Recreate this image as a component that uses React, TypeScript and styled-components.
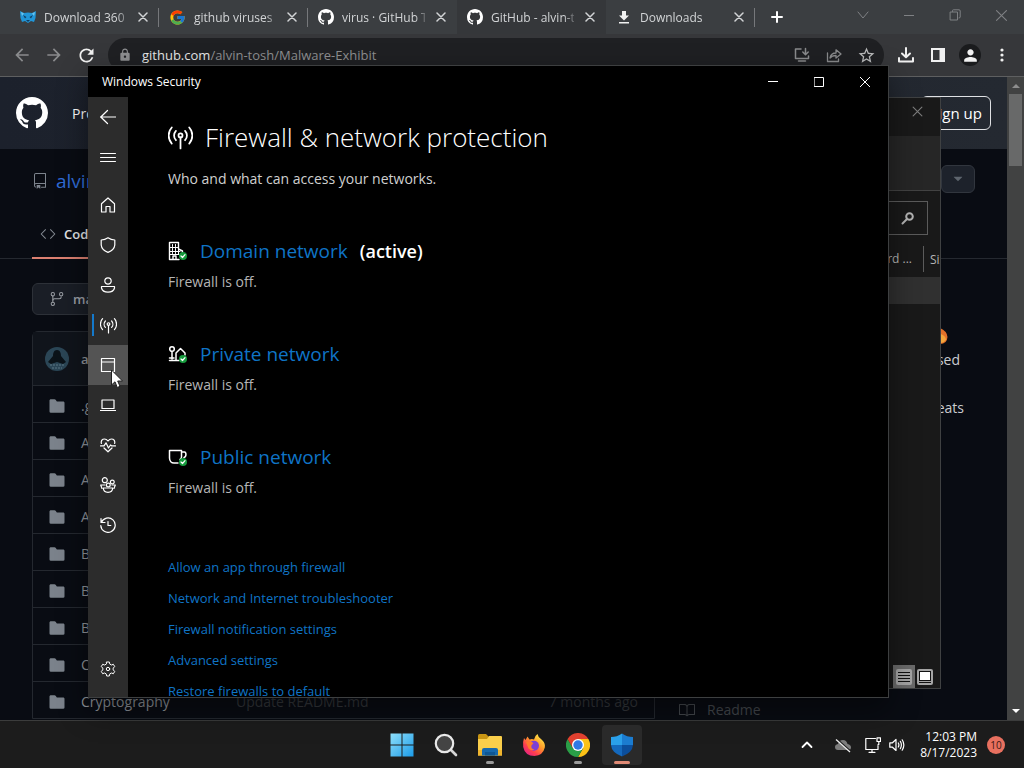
import React from "react";
import styled, { createGlobalStyle, css } from "styled-components";
import {
  GoRepo,
  GoCode,
  GoGitBranch,
  GoFileDirectoryFill,
  GoBook,
  GoTriangleDown,
} from "react-icons/go";
import { FcGoogle } from "react-icons/fc";
import { MdLock, MdStarOutline, MdRefresh, MdPerson, MdArrowBack, MdArrowForward } from "react-icons/md";

const GlobalStyle = createGlobalStyle`
  * { box-sizing: border-box; }
  body {
    margin: 0;
    background: #0a0d14;
    font-family: "Open Sans", "Noto Sans", sans-serif;
    font-size: 13px;
    color: #fff;
  }
  button {
    font: inherit;
    color: inherit;
    background: none;
    border: 0;
    padding: 0;
    display: flex;
    align-items: center;
    justify-content: center;
  }
  a { color: inherit; text-decoration: none; }
  svg { display: block; flex: none; }
  h1, h2, p, ul { margin: 0; padding: 0; font-weight: 400; }
  ul { list-style: none; }
`;

const Desktop = styled.div`
  position: relative;
  display: flex;
  flex-direction: column;
  height: 100vh;
  overflow: hidden;
`;

/* ---------- Browser ---------- */

const Browser = styled.div`
  flex: 1;
  min-height: 0;
  display: flex;
  flex-direction: column;
`;

const TabStrip = styled.div`
  display: flex;
  height: 34px;
  padding-left: 10px;
  background: #3b3e41;
`;

const Tab = styled.div<{ $active?: boolean; $divider?: boolean }>`
  flex: 0 1 149px;
  min-width: 0;
  display: flex;
  align-items: center;
  gap: 8px;
  padding: 0 8px 0 10px;
  position: relative;
  color: #d2d4d6;
  font-size: 12px;
  background: ${(p) => (p.$active ? "#35373a" : "transparent")};
  ${(p) =>
    p.$divider &&
    css`
      &::after {
        content: "";
        position: absolute;
        right: 0;
        top: 8px;
        width: 1px;
        height: 19px;
        background: #76787b;
      }
    `}
`;

const TabTitle = styled.span`
  flex: 1;
  min-width: 0;
  overflow: hidden;
  white-space: nowrap;
  mask-image: linear-gradient(to right, #000 88%, transparent 105%);
`;

const TabClose = styled.button`
  width: 16px;
  height: 16px;
`;

const NewTab = styled.button`
  width: 44px;
  height: 34px;
`;

const BrowserControls = styled.div`
  display: flex;
  height: 30px;
  margin-left: auto;
  color: #7f8184;
  button { width: 46px; }
`;

const Toolbar = styled.div`
  display: flex;
  align-items: center;
  height: 43px;
  padding: 0 6px;
  background: #36373a;
  border-bottom: 1px solid #5e5f60;
`;

const ToolButton = styled.button<{ $dim?: boolean }>`
  width: 32px;
  height: 32px;
  color: ${(p) => (p.$dim ? "#8a8b8d" : "#f1f1f1")};
`;

const AddressBar = styled.div`
  flex: 1;
  display: flex;
  align-items: center;
  height: 34px;
  margin: 0 6px;
  padding: 0 2px 0 10px;
  border-radius: 17px;
  background: #1f2023;
  color: #8e8f91;
`;

const Url = styled.span`
  flex: 1;
  margin-left: 10px;
  font-size: 13px;
  b { font-weight: 400; color: #e6e7e8; }
`;

const Avatar = styled.span`
  display: flex;
  align-items: center;
  justify-content: center;
  width: 22px;
  height: 22px;
  border-radius: 50%;
  background: #1a1b1d;
`;

const Viewport = styled.div`
  flex: 1;
  min-height: 0;
  display: flex;
`;

const ScrollBar = styled.div`
  flex: none;
  width: 17px;
  display: flex;
  flex-direction: column;
  align-items: center;
  justify-content: space-between;
  padding: 7px 0;
  background: #414242;
`;

const ScrollTop = styled.div`
  display: flex;
  flex-direction: column;
  align-items: center;
  gap: 6px;
`;

const Thumb = styled.div`
  width: 13px;
  height: 72px;
  background: #686969;
`;

/* ---------- Repository page ---------- */

const Page = styled.div`
  flex: 1;
  min-width: 0;
  overflow: hidden;
  background: #090c13;
`;

const SiteHeader = styled.header`
  display: flex;
  align-items: center;
  gap: 24px;
  height: 72px;
  padding: 0 16px;
  background: linear-gradient(to right, #1c212c, #242931);
  font-size: 14px;
`;

const SignUp = styled.button`
  height: 34px;
  margin-left: auto;
  padding: 0 8px;
  border: 1px solid #dfe1e4;
  border-radius: 6px;
  font-size: 15px;
`;

const RepoHead = styled.div`
  display: flex;
  align-items: flex-start;
  justify-content: space-between;
  padding: 16px 32px 0;
`;

const RepoName = styled.div`
  display: flex;
  align-items: center;
  gap: 8px;
  height: 32px;
  color: #7d848d;
  font-size: 19px;
  a { color: #2f6bd6; }
`;

const MoreButton = styled.button`
  height: 28px;
  padding: 0 8px;
  border: 1px solid #31363e;
  border-radius: 6px;
  background: #1d222b;
  color: #5d646d;
`;

const RepoTabs = styled.nav`
  display: flex;
  height: 48px;
  margin-top: 14px;
  padding: 0 32px;
  border-bottom: 1px solid #252930;
`;

const RepoTab = styled.a`
  display: flex;
  align-items: center;
  gap: 8px;
  height: 48px;
  padding: 0 8px;
  border-bottom: 2px solid #dc8071;
  font-weight: 600;
  color: #e4e6e8;
  svg { color: #858b93; }
`;

const Columns = styled.div`
  display: flex;
  gap: 24px;
  padding: 24px 32px 0;
`;

const FilesColumn = styled.div`
  flex: 1;
  min-width: 0;
`;

const BranchButton = styled.button`
  height: 32px;
  gap: 8px;
  padding: 0 16px;
  border: 1px solid #2d3138;
  border-radius: 6px;
  background: #1a1e26;
  color: #9b9fa5;
  font-weight: 600;
`;

const FileBox = styled.div`
  margin-top: 16px;
  border: 1px solid #24282f;
  border-radius: 6px 6px 0 0;
  color: #90949a;
`;

const CommitBar = styled.div`
  display: flex;
  align-items: center;
  gap: 12px;
  height: 53px;
  padding: 0 12px;
  background: #10141b;
  font-weight: 600;
`;

const FileRow = styled.li`
  display: flex;
  align-items: center;
  height: 37px;
  padding: 3px 16px 0 15px;
  border-top: 1px solid #24282f;
  font-size: 14px;
  svg { color: #7b828b; }
`;

const FileName = styled.a`
  width: 155px;
  margin-left: 15px;
`;

const FileNote = styled.span`
  flex: 1;
  color: #34373b;
`;

const FileAge = styled.time`
  color: #34373b;
`;

const AboutColumn = styled.aside`
  flex: 0 0 296px;
  display: flex;
  flex-direction: column;
  font-size: 14px;
  line-height: 24px;
`;

const AboutText = styled.p`
  display: flex;
  flex-direction: column;
  align-items: flex-end;
  height: 375px;
  padding: 41px 11px 0 0;
  color: #c9ccd0;
`;

const AboutLine = styled.span<{ $inset?: number }>`
  display: flex;
  align-items: center;
  height: 24px;
  padding-right: ${(p) => p.$inset ?? 0}px;
`;

const ReadmeLink = styled.a`
  display: flex;
  align-items: center;
  gap: 12px;
  margin-top: 40px;
  color: #44484d;
`;

/* ---------- Background explorer window ---------- */

const ExplorerWindow = styled.section`
  position: absolute;
  left: 280px;
  right: 83px;
  top: 97px;
  bottom: 79px;
  display: flex;
  flex-direction: column;
  border: 1px solid #3f4142;
  background: #191919;
  color: #b4b4b4;
`;

const ExplorerTitle = styled.div`
  display: flex;
  justify-content: flex-end;
  height: 38px;
  button {
    width: 46px;
    height: 26px;
    color: #7c7c7c;
  }
`;

const ExplorerRibbon = styled.div`
  height: 55px;
  background: #262626;
  border-bottom: 1px solid #424242;
`;

const ExplorerSearch = styled.label`
  display: flex;
  align-items: center;
  align-self: flex-end;
  width: 200px;
  height: 34px;
  margin: 10px 12px 0 0;
  border: 1px solid #5b5b5b;
  padding-right: 12px;
  input {
    flex: 1;
    min-width: 0;
    border: 0;
    background: none;
  }
`;

const ExplorerHead = styled.div`
  display: flex;
  justify-content: flex-end;
  align-items: center;
  height: 42px;
  padding-top: 6px;
  font-size: 12px;
  overflow: hidden;
  span:first-child {
    padding-right: 11px;
    line-height: 26px;
    border-right: 1px solid #5b5b5b;
  }
  span:last-child {
    width: 16px;
    padding-left: 6px;
    white-space: nowrap;
    overflow: hidden;
  }
`;

const ExplorerSelected = styled.div`
  height: 27px;
  background: #303030;
`;

const ExplorerFooter = styled.div`
  display: flex;
  justify-content: flex-end;
  margin-top: auto;
  padding-right: 5px;
  button {
    width: 20px;
    height: 23px;
  }
  button:first-child {
    width: 22px;
    background: #6b6b6b;
  }
`;

/* ---------- Windows Security ---------- */

const SecurityWindow = styled.section`
  position: absolute;
  left: 88px;
  right: 135px;
  top: 65px;
  bottom: 70px;
  display: flex;
  flex-direction: column;
  border: 1px solid #3d3f40;
  border-left: 0;
  background: #000;
  box-shadow: 0 12px 28px rgba(0, 0, 0, 0.45);
  overflow: hidden;
`;

const TitleBar = styled.div`
  display: flex;
  justify-content: space-between;
  align-items: center;
  height: 31px;
  padding-left: 14px;
  font-size: 12px;
`;

const TitleControls = styled.div`
  display: flex;
  button {
    width: 46px;
    height: 31px;
  }
`;

const WindowBody = styled.div`
  flex: 1;
  min-height: 0;
  display: flex;
`;

const Rail = styled.nav`
  flex: none;
  width: 40px;
  display: flex;
  flex-direction: column;
  padding-bottom: 8px;
  background: #2c2c2c;
`;

const RailButton = styled.button<{ $hover?: boolean; $current?: boolean; $place?: "gap" | "end" }>`
  position: relative;
  width: 40px;
  height: 40px;
  margin-top: ${(p) => (p.$place === "end" ? "auto" : p.$place === "gap" ? "8px" : "0")};
  background: ${(p) => (p.$hover ? "#545454" : "transparent")};
  ${(p) =>
    p.$current &&
    css`
      &::before {
        content: "";
        position: absolute;
        left: 4px;
        top: 9px;
        width: 2px;
        height: 22px;
        background: #1479cb;
      }
    `}
`;

const Content = styled.main`
  flex: 1;
  min-width: 0;
  padding: 22px 40px 0;
  overflow: hidden;
`;

const Heading = styled.h1`
  display: flex;
  align-items: center;
  gap: 12px;
  height: 36px;
  font-size: 26px;
  font-weight: 300;
  white-space: nowrap;
`;

const Lead = styled.p`
  margin-top: 14px;
  font-size: 14px;
  line-height: 20px;
  color: #d0d0d0;
`;

const Networks = styled.div`
  display: flex;
  flex-direction: column;
  gap: 48px;
  margin-top: 48px;
`;

const NetworkTitle = styled.h2`
  display: flex;
  align-items: center;
  gap: 12px;
  height: 28px;
  font-size: 19px;
  a { color: #0f74c6; }
  strong { font-weight: 600; font-size: 18px; }
`;

const NetworkState = styled.p`
  margin-top: 6px;
  font-size: 14px;
  line-height: 21px;
  color: #b5b5b5;
`;

const LinkList = styled.ul`
  margin-top: 54px;
  font-size: 13px;
  line-height: 31px;
  color: #0f74c6;
  white-space: nowrap;
`;

/* ---------- Taskbar ---------- */

const Taskbar = styled.footer`
  display: grid;
  grid-template-columns: 1fr auto 1fr;
  align-items: center;
  height: 48px;
  border-top: 1px solid #3b3c3c;
  background: #1c1c1c;
`;

const Apps = styled.div`
  grid-column: 2;
  display: flex;
  gap: 4px;
`;

const AppButton = styled.button<{ $open?: boolean; $active?: boolean }>`
  position: relative;
  width: 40px;
  height: 40px;
  border-radius: 4px;
  background: ${(p) => (p.$active ? "#2a2a2a" : "transparent")};
  &::after {
    content: "";
    display: ${(p) => (p.$open || p.$active ? "block" : "none")};
    position: absolute;
    bottom: 1px;
    left: 50%;
    width: ${(p) => (p.$active ? 16 : 8)}px;
    height: 3px;
    border-radius: 2px;
    transform: translateX(-50%);
    background: ${(p) => (p.$active ? "#e08a75" : "#9a9a9a")};
  }
`;

const Tray = styled.div`
  display: flex;
  align-items: center;
  justify-content: flex-end;
  padding-right: 19px;
`;

const TrayButton = styled.button<{ $wide?: boolean }>`
  width: ${(p) => (p.$wide ? 36 : 24)}px;
  height: 40px;
`;

const Clock = styled.time`
  width: 68px;
  text-align: right;
  font-size: 12px;
  line-height: 16px;
  white-space: nowrap;
`;

const Badge = styled.span`
  width: 18px;
  height: 18px;
  margin-left: 10px;
  border-radius: 50%;
  background: #e8705f;
  color: #3a1712;
  font-size: 10px;
  line-height: 18px;
  text-align: center;
`;

/* ---------- Icons ---------- */

type LineProps = { d: string; size?: number; w?: number; box?: number; children?: React.ReactNode };

const Line = ({ d, size = 16, w = 1, box = 16, children }: LineProps) => (
  <svg
    width={size}
    height={size}
    viewBox={`0 0 ${box} ${box}`}
    fill="none"
    stroke="currentColor"
    strokeWidth={w}
    strokeLinecap="round"
    strokeLinejoin="round"
    aria-hidden="true"
  >
    <path d={d} />
    {children}
  </svg>
);

const CROSS = "M1 1L9 9M9 1L1 9";

const OctocatMark = ({ size = 16 }: { size?: number }) => (
  <svg width={size} height={size} viewBox="0 0 16 16" fill="#fff" aria-hidden="true">
    <path d="M8 0c4.42 0 8 3.58 8 8a8.013 8.013 0 0 1-5.45 7.59c-.4.08-.55-.17-.55-.38 0-.27.01-1.13.01-2.2 0-.75-.25-1.23-.54-1.48 1.78-.2 3.65-.88 3.65-3.95 0-.88-.31-1.59-.82-2.15.08-.2.36-1.02-.08-2.12 0 0-.67-.22-2.2.82-.64-.18-1.32-.27-2-.27-.68 0-1.36.09-2 .27-1.53-1.03-2.2-.82-2.2-.82-.44 1.1-.16 1.92-.08 2.12-.51.56-.82 1.28-.82 2.15 0 3.06 1.86 3.75 3.64 3.95-.23.2-.44.55-.51 1.07-.46.21-1.61.55-2.33-.66-.15-.24-.6-.83-1.23-.82-.67.01-.27.38.01.53.34.19.73.9.82 1.13.16.45.68 1.31 2.69.94 0 .67.01 1.3.01 1.49 0 .21-.15.45-.55.38A7.995 7.995 0 0 1 0 8c0-4.42 3.58-8 8-8Z" />
  </svg>
);

const Antenna = ({ size = 17, w = 1 }: { size?: number; w?: number }) => (
  <Line
    size={size}
    w={w}
    box={24}
    d="M12 12V22.5M7.6 14.6A6.6 6.6 0 0 1 7.6 5.6M16.4 14.6A6.6 6.6 0 0 0 16.4 5.6M3.6 17.8A11.5 11.5 0 0 1 3.6 2.4M20.4 17.8A11.5 11.5 0 0 0 20.4 2.4"
  >
    <circle cx="12" cy="10" r="1.9" />
  </Line>
);

const Check = () => (
  <>
    <circle cx="15" cy="15" r="4" fill="#169b3d" stroke="none" />
    <path d="M13 15L14.5 16.5L17 13.7" stroke="#fff" strokeWidth="1.2" />
  </>
);

const DomainIcon = () => (
  <Line size={20} box={20} w={1.4} d="M1.5 18.5V1.5H10.5V8L14.5 10V12M1.5 18.5H11M5 18V15H8V18">
    <path
      d="M4.5 3.5V5.5M7.5 3.5V5.5M4.5 7.5V9.5M7.5 7.5V9.5M4.5 11.5V12.5M7.5 11.5V12.5M10.5 8V13.5M2 6.5H10M2 10.5H12M2 13.5H11"
      strokeWidth="1"
    />
    <Check />
  </Line>
);

const PrivateIcon = () => (
  <Line size={20} box={20} w={1.5} d="M1.5 16.5H11M4 8V15M8 16V9L12.5 4.5L17 9V11M1.5 14H6">
    <circle cx="4" cy="5" r="2.3" />
    <Check />
  </Line>
);

const PublicIcon = () => (
  <Line
    size={20}
    box={20}
    w={1.5}
    d="M1.5 3.5H13.5V10C13.5 11 13 12 12 12.5M1.5 3.5V11C1.5 14 3.5 16 6 16H10M13.5 5H16.5C18.5 5 18.5 10 16 10.5"
  >
    <Check />
  </Line>
);

const GearIcon = () => (
  <Line d="M6.7 1H9.3L9.8 3.1L11.3 4L13.4 3.3L14.7 5.6L13.2 7.1V8.9L14.7 10.4L13.4 12.7L11.3 12L9.8 12.9L9.3 15H6.7L6.2 12.9L4.7 12L2.6 12.7L1.3 10.4L2.8 8.9V7.1L1.3 5.6L2.6 3.3L4.7 4L6.2 3.1Z">
    <circle cx="8" cy="8" r="1.7" />
  </Line>
);

const PantherIcon = () => (
  <svg width="16" height="16" viewBox="0 0 16 16" aria-hidden="true">
    <path d="M0 2L4 4L8 3.5L12 4L16 2L15.5 9L14 13L11 12L8 14L5 12L2 13L.5 9Z" fill="#2196d8" />
    <path d="M3 6L6.5 8L5 9.5ZM13 6L9.5 8L11 9.5ZM6 11H10L8 13Z" fill="#123f63" />
    <path d="M1 3L4 4.5L2 7ZM15 3L12 4.5L14 7Z" fill="#6cc4ee" />
  </svg>
);

const DownloadIcon = () => (
  <svg width="16" height="16" viewBox="0 0 16 16" fill="#f1f1f1" aria-hidden="true">
    <path d="M6 2H10V6.5H13L8 11.5L3 6.5H6ZM3 13H13V14.6H3Z" />
  </svg>
);

const ProfilePicture = () => (
  <svg width="24" height="24" viewBox="0 0 24 24" aria-hidden="true">
    <circle cx="12" cy="12" r="12" fill="#2b4656" />
    <path d="M12 3C15 3 16 6 16 9L21 15L18 17L12 15L6 17L3 15L8 9C8 6 9 3 12 3Z" fill="#0b1319" />
    <path d="M5 18H19M7 21H17" stroke="#5c7684" strokeDasharray="2 1" />
  </svg>
);

const StartIcon = () => (
  <svg width="24" height="24" viewBox="0 0 24 24" aria-hidden="true">
    <defs>
      <linearGradient id="start" x1="0" y1="0" x2="1" y2="1">
        <stop offset="0" stopColor="#8fe0fb" />
        <stop offset="1" stopColor="#1b9be8" />
      </linearGradient>
    </defs>
    <path d="M.5.5H11.5V11.5H.5ZM12.5.5H23.5V11.5H12.5ZM.5 12.5H11.5V23.5H.5ZM12.5 12.5H23.5V23.5H12.5Z" fill="url(#start)" />
  </svg>
);

const SearchIcon = () => (
  <svg width="24" height="24" viewBox="0 0 24 24" fill="none" aria-hidden="true">
    <path d="M17 17L22 22" stroke="#d6d6d6" strokeWidth="2.6" strokeLinecap="round" />
    <circle cx="10.5" cy="10.5" r="8.7" fill="#444" stroke="#e9e9e9" strokeWidth="2.2" />
  </svg>
);

const FolderIcon = () => (
  <svg width="26" height="24" viewBox="0 0 26 24" aria-hidden="true">
    <path d="M1 2.5Q1 1 2.5 1H9L11.5 3.5V8H1Z" fill="#c99513" />
    <path d="M1 6H10L12 3H24Q25 3 25 4V22.5H1Z" fill="#fbcf4b" />
    <path d="M1 17H25V22.5H1Z" fill="#f0b52e" />
    <path d="M5 22.5V17Q5 15 7 15H19Q21 15 21 17V22.5Z" fill="#1769ad" />
    <path d="M8 19H18V22.5H8Z" fill="#0f5794" />
  </svg>
);

const FirefoxIcon = () => (
  <svg width="24" height="24" viewBox="0 0 24 24" aria-hidden="true">
    <defs>
      <linearGradient id="fox" x1="1" y1="0" x2="0.2" y2="1">
        <stop offset="0.1" stopColor="#fff04a" />
        <stop offset="0.45" stopColor="#ff9a2a" />
        <stop offset="0.75" stopColor="#ff3d4f" />
        <stop offset="1" stopColor="#e0208a" />
      </linearGradient>
    </defs>
    <path d="M2 5L3.5 7L5.5 3.5L7.5 6.5Q10 5.5 12 6.5Q12.5 3 15.5 1Q16 4 19 6L20.5 7.5Q23.5 10.5 22.8 14.5Q21 22.5 12.5 23Q3 23 1.2 14Q.5 9 2 5Z" fill="url(#fox)" />
    <circle cx="12" cy="12.8" r="5" fill="#7c3fd6" />
    <path d="M4 9Q8 7 11.5 10L9.5 12.5Q8.5 16 12.5 16.5Q9 18.5 6.5 15.5Z" fill="#ff7a2c" />
  </svg>
);

const ChromeIcon = () => (
  <svg width="24" height="24" viewBox="0 0 24 24" aria-hidden="true">
    <path d="M12 6H22.4A12 12 0 0 1 12 24L17.2 15Z" fill="#fbc116" />
    <path d="M1.6 6L6.8 15L12 18L17.2 15L12 24A12 12 0 0 1 1.6 6Z" fill="#2a9e47" />
    <path d="M12 6H22.4A12 12 0 0 0 1.6 6L6.8 15Z" fill="#e0402f" />
    <circle cx="12" cy="12" r="6" fill="#fff" />
    <circle cx="12" cy="12" r="4.7" fill="#3079e6" />
  </svg>
);

const ShieldIcon = () => (
  <svg width="24" height="24" viewBox="0 0 24 24" aria-hidden="true">
    <path d="M12 .5Q7 4 1 4V12H12Z" fill="#2aa0ea" />
    <path d="M12 .5Q17 4 23 4V12H12Z" fill="#1b7cd0" />
    <path d="M1 12Q1.5 19.5 12 23.5V12Z" fill="#1469bd" />
    <path d="M23 12Q22.5 19.5 12 23.5V12Z" fill="#0b4e9c" />
  </svg>
);

const Flame = () => (
  <svg width="16" height="18" viewBox="0 0 16 18" aria-hidden="true">
    <path d="M8 1Q15 4 15.5 10Q15 17 8 17Q1 17 1 11Q2 7 4 5L6 8Z" fill="#e2702a" />
    <path d="M9 7Q14 9 14 13Q11 17 7 16Q4 13 7 11Z" fill="#f3a53c" />
  </svg>
);

const Pointer = styled.svg`
  position: absolute;
  left: 110px;
  top: 369px;
  z-index: 2;
`;

/* ---------- Data ---------- */

const tabs = [
  { title: "Download 360 Total", icon: <PantherIcon />, divider: true },
  { title: "github viruses - Google", icon: <FcGoogle size={17} />, divider: true },
  { title: "virus · GitHub Topics", icon: <OctocatMark /> },
  { title: "GitHub - alvin-tosh", icon: <OctocatMark />, active: true },
  { title: "Downloads", icon: <DownloadIcon />, divider: true },
];

const files = [".g", "A", "A", "A", "B", "B", "B", "C", "Cryptography"];

const railItems = [
  { label: "Home", icon: <Line w={1.2} d="M1.5 6.8L8 1L14.5 6.8V15H10V9.5H6V15H1.5Z" />, place: "gap" as const },
  { label: "Virus & threat protection", icon: <Line w={1.2} d="M8 .8Q11 3 14.8 3V8Q14.3 13 8 15.4Q1.7 13 1.2 8V3Q5 3 8 .8Z" /> },
  {
    label: "Account protection",
    icon: (
      <Line w={1.2} d="M1.5 9.5H14.5V11Q13.5 15.2 8 15.2Q2.5 15.2 1.5 11Z">
        <circle cx="8" cy="4" r="3.2" />
      </Line>
    ),
  },
  { label: "Firewall & network protection", icon: <Antenna w={1.7} />, current: true },
  { label: "App & browser control", icon: <Line w={1.2} d="M1.5 1.5H14.5V14.5H1.5ZM1.5 5H14.5" />, hover: true },
  { label: "Device security", icon: <Line w={1.2} d="M2 3H14V11.5H2ZM.5 13.5H15.5" /> },
  {
    label: "Device performance & health",
    icon: (
      <Line
        w={1.2}
        d="M1.4 6.5Q.6 3.5 3 2.3Q5.8 1.2 8 4Q10.2 1.2 13 2.3Q15.4 3.5 14.6 6.5M4 11L8 14.8L12 11M.5 8.8H4L6 5.8L8.5 11L10.5 8L11.5 8.8H15.5"
      />
    ),
  },
  {
    label: "Family options",
    icon: (
      <Line w={1.2} d="M3.3 11H12.7Q12.5 15.3 8 15.3Q3.5 15.3 3.3 11ZM2 11.5L.7 8H5M14 11.5L15.3 8H12">
        <circle cx="4.8" cy="3.2" r="2.5" />
        <circle cx="8.3" cy="8" r="1.9" />
        <circle cx="12.3" cy="5" r="1.9" />
      </Line>
    ),
  },
  { label: "Protection history", icon: <Line w={1.2} d="M1 1.5V5.5H5M1.3 5.5A7.2 7.2 0 1 1 .8 8.5M8 4.5V8.5H10.8" /> },
];

const networks = [
  { name: "Domain network", icon: <DomainIcon />, active: true },
  { name: "Private network", icon: <PrivateIcon /> },
  { name: "Public network", icon: <PublicIcon /> },
];

const links = [
  "Allow an app through firewall",
  "Network and Internet troubleshooter",
  "Firewall notification settings",
  "Advanced settings",
  "Restore firewalls to default",
];

/* ---------- App ---------- */

export default function App() {
  return (
    <>
      <GlobalStyle />
      <Desktop>
        <Browser>
          <TabStrip>
            {tabs.map((t) => (
              <Tab key={t.title} $active={t.active} $divider={t.divider}>
                {t.icon}
                <TabTitle>{t.title}</TabTitle>
                <TabClose aria-label={`Close ${t.title}`}>
                  <Line size={10} box={10} w={1.5} d={CROSS} />
                </TabClose>
              </Tab>
            ))}
            <NewTab aria-label="New tab">
              <Line size={12} box={12} w={2} d="M6 1V11M1 6H11" />
            </NewTab>
            <BrowserControls>
              <button aria-label="Search tabs"><Line size={12} box={12} d="M1 3L6 9L11 3" /></button>
              <button aria-label="Minimize browser"><Line size={10} box={10} d="M0 5.5H10" /></button>
              <button aria-label="Restore browser">
                <Line size={12} box={12} d="M3.5 2.5V1.5Q3.5.8 4.5.8H10Q11.2.8 11.2 2V8Q11.2 9 10 9M1.5 3H8.5V11H1.5Z" />
              </button>
              <button aria-label="Close browser"><Line size={11} box={10} d="M.5.5L9.5 9.5M9.5.5L.5 9.5" /></button>
            </BrowserControls>
          </TabStrip>
          <Toolbar>
            <ToolButton $dim aria-label="Back"><MdArrowBack size={20} /></ToolButton>
            <ToolButton $dim aria-label="Forward"><MdArrowForward size={20} /></ToolButton>
            <ToolButton aria-label="Reload"><MdRefresh size={21} /></ToolButton>
            <AddressBar>
              <MdLock size={14} />
              <Url><b>github.com</b>/alvin-tosh/Malware-Exhibit</Url>
              <ToolButton $dim aria-label="Install app">
                <Line w={1.5} d="M7 2H1.5V11.5H14.5V9M4.5 14H11.5M11.5 1.5V7.5M8.8 5L11.5 7.7L14.2 5" />
              </ToolButton>
              <ToolButton $dim aria-label="Share">
                <Line w={1.3} d="M1.5 6V14.5H12.5V12M4 11Q5 6 10 6V2.8L15 7L10 11V8.5Q6 8.5 4 11Z" />
              </ToolButton>
              <ToolButton $dim aria-label="Bookmark"><MdStarOutline size={19} color="#b9babb" /></ToolButton>
            </AddressBar>
            <ToolButton aria-label="Downloads">
              <Line w={2} d="M8 1V10M4 6.5L8 10.3L12 6.5M1 11V14.5H15V11" />
            </ToolButton>
            <ToolButton aria-label="Side panel">
              <svg width="16" height="16" viewBox="0 0 16 16" fill="#f1f1f1" aria-hidden="true">
                <path fillRule="evenodd" d="M1 1H15V15H1ZM3 3V13H9.5V3Z" />
              </svg>
            </ToolButton>
            <ToolButton aria-label="Profile"><Avatar><MdPerson size={19} /></Avatar></ToolButton>
            <ToolButton aria-label="Menu">
              <svg width="4" height="14" viewBox="0 0 4 14" fill="#f1f1f1" aria-hidden="true">
                <circle cx="2" cy="2" r="1.6" />
                <circle cx="2" cy="7" r="1.6" />
                <circle cx="2" cy="12" r="1.6" />
              </svg>
            </ToolButton>
          </Toolbar>
          <Viewport>
            <Page>
              <SiteHeader>
                <OctocatMark size={32} />
                <a href="#product">Product</a>
                <SignUp>Sign up</SignUp>
              </SiteHeader>
              <RepoHead>
                <RepoName>
                  <GoRepo size={16} />
                  <a href="#owner">alvin-tosh</a>
                </RepoName>
                <MoreButton aria-label="More"><GoTriangleDown size={16} /></MoreButton>
              </RepoHead>
              <RepoTabs>
                <RepoTab href="#code"><GoCode size={16} />Code</RepoTab>
              </RepoTabs>
              <Columns>
                <FilesColumn>
                  <BranchButton><GoGitBranch size={16} />master</BranchButton>
                  <FileBox>
                    <CommitBar><ProfilePicture />alvin-tosh</CommitBar>
                    <ul>
                      {files.map((f, i) => (
                        <FileRow key={i}>
                          <GoFileDirectoryFill size={18} />
                          <FileName href="#file">{f}</FileName>
                          {i === files.length - 1 && (
                            <>
                              <FileNote>Update README.md</FileNote>
                              <FileAge>7 months ago</FileAge>
                            </>
                          )}
                        </FileRow>
                      ))}
                    </ul>
                  </FileBox>
                </FilesColumn>
                <AboutColumn>
                  <AboutText>
                    <AboutLine $inset={16}><Flame /></AboutLine>
                    <AboutLine $inset={4}>analysed</AboutLine>
                    <AboutLine />
                    <AboutLine>threats</AboutLine>
                  </AboutText>
                  <ReadmeLink href="#readme"><GoBook size={16} />Readme</ReadmeLink>
                </AboutColumn>
              </Columns>
            </Page>
            <ScrollBar>
              <ScrollTop>
                <svg width="8" height="4" viewBox="0 0 8 4" aria-hidden="true"><path d="M0 4L4 0L8 4Z" fill="#8d8d8d" /></svg>
                <Thumb />
              </ScrollTop>
              <svg width="8" height="4" viewBox="0 0 8 4" aria-hidden="true"><path d="M0 0L4 4L8 0Z" fill="#fff" /></svg>
            </ScrollBar>
          </Viewport>
        </Browser>

        <ExplorerWindow aria-label="File explorer">
          <ExplorerTitle>
            <button aria-label="Close explorer"><Line size={11} box={10} d={CROSS} /></button>
          </ExplorerTitle>
          <ExplorerRibbon />
          <ExplorerSearch>
            <input aria-label="Search" />
            <Line size={14} box={14} w={2} d="M1.5 12.5L6 8"><circle cx="8.5" cy="5.5" r="3.3" /></Line>
          </ExplorerSearch>
          <ExplorerHead><span>Password ...</span><span>Size</span></ExplorerHead>
          <ExplorerSelected />
          <ExplorerFooter>
            <button aria-label="Details view">
              <svg width="16" height="16" viewBox="0 0 16 16" aria-hidden="true">
                <rect width="16" height="16" rx="2" fill="#a5a5a5" />
                <path d="M2 3.5H14M2 6.5H14M2 9.5H14M2 12.5H14" stroke="#111" />
              </svg>
            </button>
            <button aria-label="Icon view">
              <svg width="16" height="16" viewBox="0 0 16 16" aria-hidden="true">
                <rect width="16" height="16" rx="2" fill="#a5a5a5" />
                <rect x="2.5" y="2.5" width="11" height="9" fill="#fff" stroke="#111" />
                <path d="M2 13.5H14" stroke="#111" />
              </svg>
            </button>
          </ExplorerFooter>
        </ExplorerWindow>

        <SecurityWindow aria-label="Windows Security">
          <TitleBar>
            Windows Security
            <TitleControls>
              <button aria-label="Minimize"><Line size={10} box={10} d="M0 4.5H10" /></button>
              <button aria-label="Maximize"><Line size={10} box={10} d="M.5.5H9.5V9.5H.5Z" /></button>
              <button aria-label="Close"><Line size={10} box={10} d="M0 0L10 10M10 0L0 10" /></button>
            </TitleControls>
          </TitleBar>
          <WindowBody>
            <Rail>
              <RailButton aria-label="Back"><Line w={1.2} d="M.5 8H15.5M7.5 1.5L.8 8L7.5 14.5" /></RailButton>
              <RailButton aria-label="Menu"><Line w={1} d="M.5 4.5H15.5M.5 8.5H15.5M.5 12.5H15.5" /></RailButton>
              {railItems.map((r) => (
                <RailButton key={r.label} aria-label={r.label} $place={r.place} $current={r.current} $hover={r.hover}>
                  {r.icon}
                </RailButton>
              ))}
              <RailButton aria-label="Settings" $place="end"><GearIcon /></RailButton>
            </Rail>
            <Content>
              <Heading><Antenna size={25} w={1.7} />Firewall &amp; network protection</Heading>
              <Lead>Who and what can access your networks.</Lead>
              <Networks>
                {networks.map((n) => (
                  <div key={n.name}>
                    <NetworkTitle>
                      {n.icon}
                      <a href="#network">{n.name}</a>
                      {n.active && <strong>(active)</strong>}
                    </NetworkTitle>
                    <NetworkState>Firewall is off.</NetworkState>
                  </div>
                ))}
              </Networks>
              <LinkList>
                {links.map((l) => (
                  <li key={l}><a href="#settings">{l}</a></li>
                ))}
              </LinkList>
            </Content>
          </WindowBody>
        </SecurityWindow>

        <Pointer width="14" height="21" viewBox="0 0 14 21" aria-hidden="true">
          <path d="M1.5 1V16L5 12.8L7.3 18.5L10 17.3L7.7 12H12.5Z" fill="#fff" stroke="#222" strokeWidth="1" />
        </Pointer>

        <Taskbar>
          <Apps>
            <AppButton aria-label="Start"><StartIcon /></AppButton>
            <AppButton aria-label="Search"><SearchIcon /></AppButton>
            <AppButton $open aria-label="File Explorer"><FolderIcon /></AppButton>
            <AppButton aria-label="Firefox"><FirefoxIcon /></AppButton>
            <AppButton $open aria-label="Chrome"><ChromeIcon /></AppButton>
            <AppButton $active aria-label="Windows Security"><ShieldIcon /></AppButton>
          </Apps>
          <Tray>
            <TrayButton $wide aria-label="Hidden icons"><Line size={12} box={12} w={1.8} d="M1.5 8L6 3.5L10.5 8" /></TrayButton>
            <TrayButton $wide aria-label="OneDrive">
              <svg width="18" height="16" viewBox="0 0 18 16" aria-hidden="true">
                <path d="M4 13Q1 13 1 10Q1 7.5 4 7Q5 3 9 3Q12.5 3 13.5 7Q17 7.5 17 10.5Q17 13 14 13Z" fill="#7d7d7d" />
                <path d="M2.5 2L16.5 14.5" stroke="#1c1c1c" strokeWidth="2" />
                <path d="M2 2.5L16 15" stroke="#eee" strokeWidth="1.3" />
              </svg>
            </TrayButton>
            <TrayButton aria-label="Network">
              <Line w={1.2} d="M10.5 1.5H.8V12.5H13V8.5M7 12.5V15.2M4 15.3H10M12 .8H15.5V4.5H12ZM13.8 4.5V7.5H13" />
            </TrayButton>
            <TrayButton aria-label="Volume">
              <Line w={1.2} d="M.8 5.8H3.5L7 2.5V13.5L3.5 10.2H.8ZM9.3 6Q10.5 8 9.3 10M11.3 4.3Q13.5 8 11.3 11.7M13.2 2.8Q16.5 8 13.2 13.2" />
            </TrayButton>
            <Clock>12:03 PM<br />8/17/2023</Clock>
            <Badge>10</Badge>
          </Tray>
        </Taskbar>
      </Desktop>
    </>
  );
}
